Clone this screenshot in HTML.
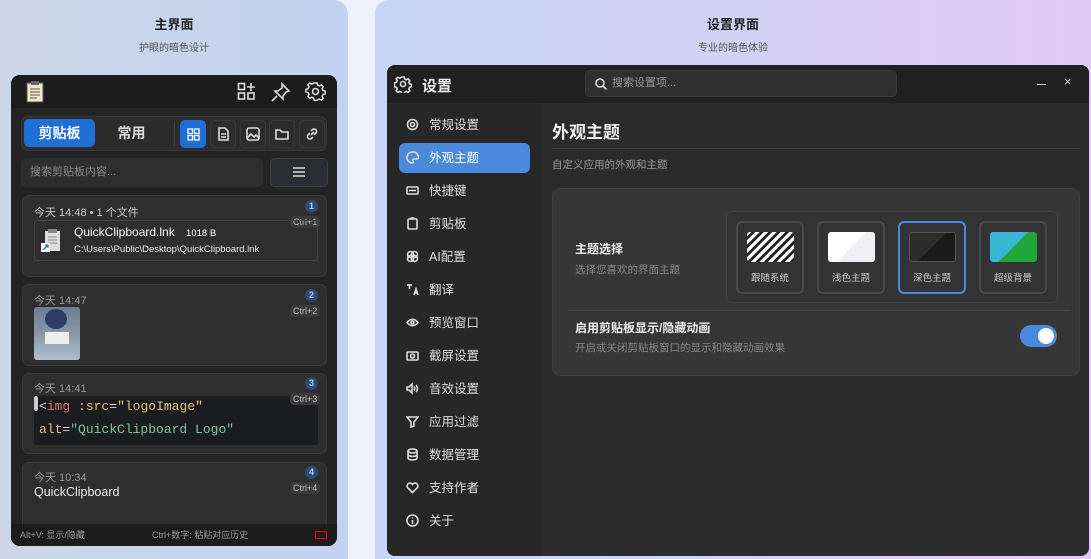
<!DOCTYPE html>
<html><head><meta charset="utf-8"><style>
*{box-sizing:border-box;margin:0;padding:0}
body{width:1091px;height:559px;overflow:hidden;font-family:"Liberation Sans","Noto Sans CJK SC",sans-serif;background:#eef1fb;position:relative}
.abs{position:absolute}
.lc{left:0;top:0;width:348px;height:559px;background:linear-gradient(90deg,#cdd6e6,#c2d3f1);border-radius:0 14px 0 0}
.rc{left:375px;top:0;width:716px;height:559px;background:linear-gradient(90deg,#c7d6f6,#d6d0f4 60%,#e3caf6);border-radius:14px 0 0 0}
.t1{font-size:13px;font-weight:bold;color:#222;text-align:center}
.t2{font-size:10px;color:#555;text-align:center}
.app{left:11px;top:75px;width:326px;height:471px;background:#232323;border-radius:9px;overflow:hidden}
.ic{stroke:#ddd;fill:none;stroke-width:1.6}
.card{left:11px;width:305px;background:#2e2e2e;border:1px solid #3a3a3a;border-radius:7px}
.badge{width:13px;height:13px;border-radius:50%;background:#2b4a7a;color:#bcd;font-size:9px;text-align:center;line-height:13px;font-weight:bold}
.ctrl{font-size:9px;color:#bbb;background:#3a3a3a;border-radius:4px;padding:1px 3px}
.time{font-size:11px;color:#bbb}
.set{left:387px;top:65px;width:702px;height:491px;background:#2b2b2b;border-radius:8px;overflow:hidden}
.nav{left:12px;width:131px;height:30px;font-size:12.5px;color:#ddd;line-height:30px;padding-left:30px;border-radius:6px}
.nav svg{position:absolute;left:7px;top:8px}
.opt{width:68px;height:73px;border:2px solid #4a4a4a;border-radius:6px;background:#333}
.opt .pv{position:absolute;left:9px;top:9px;width:47px;height:30px;border-radius:3px}
.opt span{position:absolute;top:47px;width:100%;text-align:center;font-size:9.5px;color:#ccc}
</style></head><body>
<div class="abs lc"></div>
<div class="abs rc"></div>
<div class="abs t1" style="left:0;top:14px;width:348px">主界面</div>
<div class="abs t2" style="left:0;top:39px;width:348px">护眼的暗色设计</div>
<div class="abs t1" style="left:375px;top:14px;width:716px">设置界面</div>
<div class="abs t2" style="left:375px;top:39px;width:716px">专业的暗色体验</div>

<div class="abs app">
 <div class="abs" style="left:0;top:0;width:326px;height:33px;background:#1c1c1c"></div>
 <svg class="abs" style="left:15px;top:5px" width="20" height="24"><rect x="1" y="3" width="16" height="19" fill="#efe6cc" stroke="#555"/><rect x="5" y="1" width="8" height="4" fill="#666"/><path d="M4 9h10M4 12h10M4 15h10M4 18h7" stroke="#555"/></svg>
 <svg class="abs ic" style="left:226px;top:7px" width="20" height="20"><rect x="1.5" y="1.5" width="6" height="6"/><rect x="1.5" y="11" width="6" height="6"/><rect x="11" y="11" width="6" height="6"/><path d="M14 1v8M10 5h8"/></svg>
 <svg class="abs ic" style="left:260px;top:7px" width="20" height="20"><path d="M11 2l7 7-3 1-3 4 0 3-8-8 3 0 4-3z M6 14l-5 5"/></svg>
 <svg class="abs ic" style="left:294px;top:6px" width="21" height="21"><circle cx="10.5" cy="10.5" r="3"/><path d="M9 2h3l.6 2.4 2 1 2.2-1.2 2 2-1.2 2.2 1 2 2.4.6v3l-2.4.6-1 2 1.2 2.2-2 2-2.2-1.2-2 1L12 21H9l-.6-2.4-2-1-2.2 1.2-2-2 1.2-2.2-1-2L0 12V9l2.4-.6 1-2L2.2 4.2l2-2 2.2 1.2 2-1z" transform="scale(.92) translate(1 0)"/></svg>
 <div class="abs" style="left:10px;top:41px;width:306px;height:35px;background:#2c2c2c;border:1px solid #383838;border-radius:7px"></div>
 <div class="abs" style="left:13px;top:44px;width:71px;height:28px;background:#1f6fd6;border-radius:5px;color:#fff;font-weight:bold;font-size:14px;text-align:center;line-height:28px">剪贴板</div>
 <div class="abs" style="left:90px;top:44px;width:61px;height:28px;color:#ddd;font-weight:bold;font-size:14px;text-align:center;line-height:28px">常用</div>
 <div class="abs" style="left:163px;top:47px;width:1px;height:24px;background:#444"></div>
 <div class="abs" style="left:169px;top:45px;width:26px;height:28px;background:#1f6fd6;border-radius:5px"></div>
 <svg class="abs" style="left:176px;top:53px" width="13" height="13" stroke="#fff" fill="none" stroke-width="1.3"><rect x="1" y="1" width="4.5" height="4.5"/><rect x="7.5" y="1" width="4.5" height="4.5"/><rect x="1" y="7.5" width="4.5" height="4.5"/><rect x="7.5" y="7.5" width="4.5" height="4.5"/></svg>
 <div class="abs" style="left:199px;top:45px;width:26px;height:28px;border:1px solid #3a3a3a;border-radius:5px"></div>
 <svg class="abs ic" style="left:206px;top:52px" width="13" height="14" stroke-width="1.2"><path d="M2 1h6l3 3v9H2z M4 7h5M4 10h5"/></svg>
 <div class="abs" style="left:229px;top:45px;width:26px;height:28px;border:1px solid #3a3a3a;border-radius:5px"></div>
 <svg class="abs ic" style="left:235px;top:52px" width="14" height="14" stroke-width="1.2"><rect x="1" y="1" width="12" height="12" rx="2"/><path d="M1 11l4-4 3 3 2-2 3 3"/></svg>
 <div class="abs" style="left:258px;top:45px;width:26px;height:28px;border:1px solid #3a3a3a;border-radius:5px"></div>
 <svg class="abs ic" style="left:264px;top:53px" width="14" height="12" stroke-width="1.2"><path d="M1 2h4l2 2h6v7H1z"/></svg>
 <div class="abs" style="left:288px;top:45px;width:26px;height:28px;border:1px solid #3a3a3a;border-radius:5px"></div>
 <svg class="abs ic" style="left:294px;top:52px" width="14" height="14" stroke-width="1.2"><path d="M6 8l3-3M5 6L3 8a2.5 2.5 0 003.5 3.5L8 10M9 8l2-2A2.5 2.5 0 007.5 2.5L6 4"/></svg>
 <div class="abs" style="left:10px;top:83px;width:242px;height:29px;background:#2e2e2e;border-radius:6px;font-size:11px;color:#888;line-height:29px;padding-left:9px">搜索剪贴板内容...</div>
 <div class="abs" style="left:259px;top:83px;width:58px;height:29px;background:#2a2d33;border:1px solid #3a3f48;border-radius:5px"></div>
 <svg class="abs" style="left:282px;top:92px" width="12" height="10" stroke="#ddd" stroke-width="1.6"><path d="M0 1h12M0 5h12M0 9h12"/></svg>

 <div class="abs card" style="top:120px;height:82px"></div>
 <div class="abs time" style="left:23px;top:129px;color:#ccc">今天 14:48 • 1 个文件</div>
 <div class="abs badge" style="left:294px;top:125px">1</div>
 <div class="abs ctrl" style="left:279px;top:141px">Ctrl+1</div>
 <div class="abs" style="left:23px;top:145px;width:284px;height:41px;border:1px solid #444;border-radius:3px"></div>
 <svg class="abs" style="left:29px;top:152px" width="24" height="28"><rect x="5" y="4" width="15" height="20" fill="#ddd"/><rect x="8" y="2" width="9" height="4" fill="#888"/><path d="M8 10h9M8 13h9M8 16h9" stroke="#888"/><rect x="1" y="16" width="9" height="9" fill="#fff"/><path d="M3 23l5-5M5 18h3v3" stroke="#1a6fd0" fill="none" stroke-width="1.3"/></svg>
 <div class="abs" style="left:63px;top:150px;font-size:12px;color:#fff">QuickClipboard.lnk <span style="font-size:9.5px;margin-left:8px">1018 B</span></div>
 <div class="abs" style="left:63px;top:169px;font-size:9.5px;color:#eee">C:\Users\Public\Desktop\QuickClipboard.lnk</div>

 <div class="abs card" style="top:209px;height:82px"></div>
 <div class="abs time" style="left:23px;top:217px;color:#999">今天 14:47</div>
 <div class="abs badge" style="left:294px;top:214px">2</div>
 <div class="abs ctrl" style="left:279px;top:230px">Ctrl+2</div>
 <div class="abs" style="left:23px;top:232px;width:46px;height:53px;border-radius:3px;background:linear-gradient(180deg,#6d7c93,#8a96a8 50%,#aebfd0)"></div>
 <div class="abs" style="left:34px;top:234px;width:22px;height:20px;border-radius:50%;background:#2c3d66"></div>
 <div class="abs" style="left:34px;top:257px;width:24px;height:12px;background:#eee"></div>

 <div class="abs card" style="top:298px;height:81px"></div>
 <div class="abs time" style="left:23px;top:305px;color:#999">今天 14:41</div>
 <div class="abs badge" style="left:294px;top:302px">3</div>
 <div class="abs" style="left:23px;top:321px;width:284px;height:49px;background:#1b1c1f"></div>
 <div class="abs ctrl" style="left:279px;top:318px">Ctrl+3</div>
 <div class="abs" style="left:23px;top:321px;width:4px;height:15px;background:#ccc;border-radius:2px"></div>
 <div class="abs" style="left:28px;top:324px;font-family:'Liberation Mono',monospace;font-size:13px;color:#ddd">&lt;<span style="color:#e36d6d">img</span> <span style="color:#e5c07b">:src</span>=<span style="color:#e5c07b">"logoImage"</span></div>
 <div class="abs" style="left:28px;top:347px;font-family:'Liberation Mono',monospace;font-size:13px;color:#ddd"><span style="color:#e5c07b">alt</span>=<span style="color:#7ec699">"QuickClipboard Logo"</span></div>

 <div class="abs card" style="top:387px;height:100px"></div>
 <div class="abs time" style="left:23px;top:394px;color:#999">今天 10:34</div>
 <div class="abs badge" style="left:294px;top:391px">4</div>
 <div class="abs ctrl" style="left:279px;top:407px">Ctrl+4</div>
 <div class="abs" style="left:23px;top:410px;font-size:12.5px;color:#eee">QuickClipboard</div>

 <div class="abs" style="left:0;top:449px;width:326px;height:22px;background:#1c1c1c;font-size:9px;color:#999;line-height:22px">
  <span class="abs" style="left:9px">Alt+V: 显示/隐藏</span><span class="abs" style="left:141px">Ctrl+数字: 粘贴对应历史</span>
  <span class="abs" style="left:304px;top:7px;width:12px;height:8px;border:1px solid #e00"></span></div>
</div>

<div class="abs set">
 <div class="abs" style="left:0;top:0;width:702px;height:38px;background:#202020"></div>
 <svg class="abs ic" style="left:7px;top:10px" width="18" height="18" stroke-width="1.4"><circle cx="9" cy="9" r="2.5"/><path d="M7.8 2h2.4l.5 2 1.6.8 1.8-1 1.7 1.7-1 1.8.8 1.6 2 .5v2.4l-2 .5-.8 1.6 1 1.8-1.7 1.7-1.8-1-1.6.8-.5 2H7.8l-.5-2-1.6-.8-1.8 1-1.7-1.7 1-1.8-.8-1.6-2-.5V7.8l2-.5.8-1.6-1-1.8 1.7-1.7 1.8 1 1.6-.8z"/></svg>
 <div class="abs" style="left:35px;top:10px;font-size:15px;font-weight:bold;color:#eee">设置</div>
 <div class="abs" style="left:198px;top:5px;width:312px;height:27px;background:#2f2f2f;border:1px solid #3a3a3a;border-radius:5px;font-size:11px;color:#999;line-height:25px;padding-left:26px">搜索设置项...</div>
 <svg class="abs ic" style="left:208px;top:13px" width="12" height="12" stroke-width="1.4"><circle cx="5" cy="5" r="4"/><path d="M8 8l3.5 3.5"/></svg>
 <div class="abs" style="left:650px;top:19px;width:9px;height:1.3px;background:#ccc"></div>
 <div class="abs" style="left:677px;top:9px;font-size:13px;color:#ccc">×</div>
 <div class="abs" style="left:0;top:38px;width:154px;height:453px;background:#272727"></div>
 <div class="abs nav" style="top:45px"><svg class="ic" width="13" height="13" stroke-width="1.3"><circle cx="6.5" cy="6.5" r="2"/><circle cx="6.5" cy="6.5" r="5"/></svg>常规设置</div>
 <div class="abs nav" style="top:78px;background:#4a89dc;color:#fff"><svg class="ic" width="13" height="13" stroke="#fff" stroke-width="1.3"><path d="M6.5 1a5.5 5.5 0 000 11c1 0 1-1 .5-2s0-2 1.5-2H11a1.5 1.5 0 001.5-1.5A5.5 5.5 0 006.5 1z"/></svg>外观主题</div>
 <div class="abs nav" style="top:111px"><svg class="ic" width="13" height="13" stroke-width="1.3"><rect x="1" y="3" width="11" height="7" rx="1"/><path d="M3 6.5h7"/></svg>快捷键</div>
 <div class="abs nav" style="top:144px"><svg class="ic" width="13" height="13" stroke-width="1.3"><rect x="2" y="2" width="9" height="10" rx="1"/><path d="M4.5 1h4"/></svg>剪贴板</div>
 <div class="abs nav" style="top:177px"><svg class="ic" width="13" height="13" stroke-width="1.3"><circle cx="4.5" cy="4.5" r="3"/><circle cx="8.5" cy="4.5" r="3"/><circle cx="4.5" cy="8.5" r="3"/><circle cx="8.5" cy="8.5" r="3"/></svg>AI配置</div>
 <div class="abs nav" style="top:210px"><svg class="ic" width="13" height="13" stroke-width="1.2"><path d="M1 2h5M3.5 1v5M8 12l2-6 2 6M8.7 10h2.6"/></svg>翻译</div>
 <div class="abs nav" style="top:243px"><svg class="ic" width="13" height="13" stroke-width="1.3"><path d="M1 6.5Q6.5 0 12 6.5Q6.5 13 1 6.5z"/><circle cx="6.5" cy="6.5" r="1.5"/></svg>预览窗口</div>
 <div class="abs nav" style="top:276px"><svg class="ic" width="13" height="13" stroke-width="1.3"><rect x="1" y="3" width="11" height="8" rx="1"/><circle cx="6.5" cy="7" r="2"/></svg>截屏设置</div>
 <div class="abs nav" style="top:309px"><svg class="ic" width="13" height="13" stroke-width="1.3"><path d="M1 5h2l3-3v9L3 8H1zM8 4.5q1.5 2 0 4M10 3q3 3.5 0 7"/></svg>音效设置</div>
 <div class="abs nav" style="top:342px"><svg class="ic" width="13" height="13" stroke-width="1.3"><path d="M1 2h11L8 7v4L5 12V7z"/></svg>应用过滤</div>
 <div class="abs nav" style="top:375px"><svg class="ic" width="13" height="13" stroke-width="1.3"><ellipse cx="6.5" cy="3" rx="4.5" ry="2"/><path d="M2 3v7c0 2.5 9 2.5 9 0V3M2 6.5c0 2.5 9 2.5 9 0"/></svg>数据管理</div>
 <div class="abs nav" style="top:408px"><svg class="ic" width="13" height="13" stroke-width="1.3"><path d="M6.5 11.5L1.5 6.5a2.8 2.8 0 015-3 2.8 2.8 0 015 3z"/></svg>支持作者</div>
 <div class="abs nav" style="top:441px"><svg class="ic" width="13" height="13" stroke-width="1.3"><circle cx="6.5" cy="6.5" r="5.5"/><path d="M6.5 6v4M6.5 3.5v1"/></svg>关于</div>

 <div class="abs" style="left:165px;top:53px;font-size:17px;font-weight:bold;color:#eee">外观主题</div>
 <div class="abs" style="left:165px;top:83px;width:528px;height:1px;background:#444"></div>
 <div class="abs" style="left:165px;top:92px;font-size:10.5px;color:#999">自定义应用的外观和主题</div>
 <div class="abs" style="left:165px;top:123px;width:528px;height:188px;background:#363636;border:1px solid #3e3e3e;border-radius:8px"></div>
 <div class="abs" style="left:188px;top:175px;font-size:12px;font-weight:bold;color:#eee">主题选择</div>
 <div class="abs" style="left:188px;top:197px;font-size:10.5px;color:#888">选择您喜欢的界面主题</div>
 <div class="abs" style="left:339px;top:146px;width:332px;height:92px;background:#333;border:1px solid #3f3f3f;border-radius:6px"></div>
 <div class="abs opt" style="left:349px;top:156px"><div class="pv" style="background:repeating-linear-gradient(135deg,#fff 0 3px,#222 3px 6px)"></div><span>跟随系统</span></div>
 <div class="abs opt" style="left:430px;top:156px"><div class="pv" style="background:linear-gradient(135deg,#fff 50%,#eef0f3 50%)"></div><span>浅色主题</span></div>
 <div class="abs opt" style="left:511px;top:156px;border-color:#4a89dc"><div class="pv" style="background:linear-gradient(135deg,#2c2c2c 50%,#1a1a1a 50%);border:1px solid #555"></div><span>深色主题</span></div>
 <div class="abs opt" style="left:592px;top:156px"><div class="pv" style="background:linear-gradient(135deg,#3ab5d6 50%,#23a638 50%)"></div><span>超级背景</span></div>
 <div class="abs" style="left:181px;top:245px;width:503px;height:1px;background:#464646"></div>
 <div class="abs" style="left:188px;top:254px;font-size:12px;font-weight:bold;color:#eee">启用剪贴板显示/隐藏动画</div>
 <div class="abs" style="left:188px;top:275px;font-size:10.5px;color:#888">开启或关闭剪贴板窗口的显示和隐藏动画效果</div>
 <div class="abs" style="left:633px;top:260px;width:37px;height:22px;background:#4a89dc;border-radius:11px"></div>
 <div class="abs" style="left:651px;top:263px;width:16px;height:16px;background:#fff;border-radius:50%"></div>
</div>
</body></html>
